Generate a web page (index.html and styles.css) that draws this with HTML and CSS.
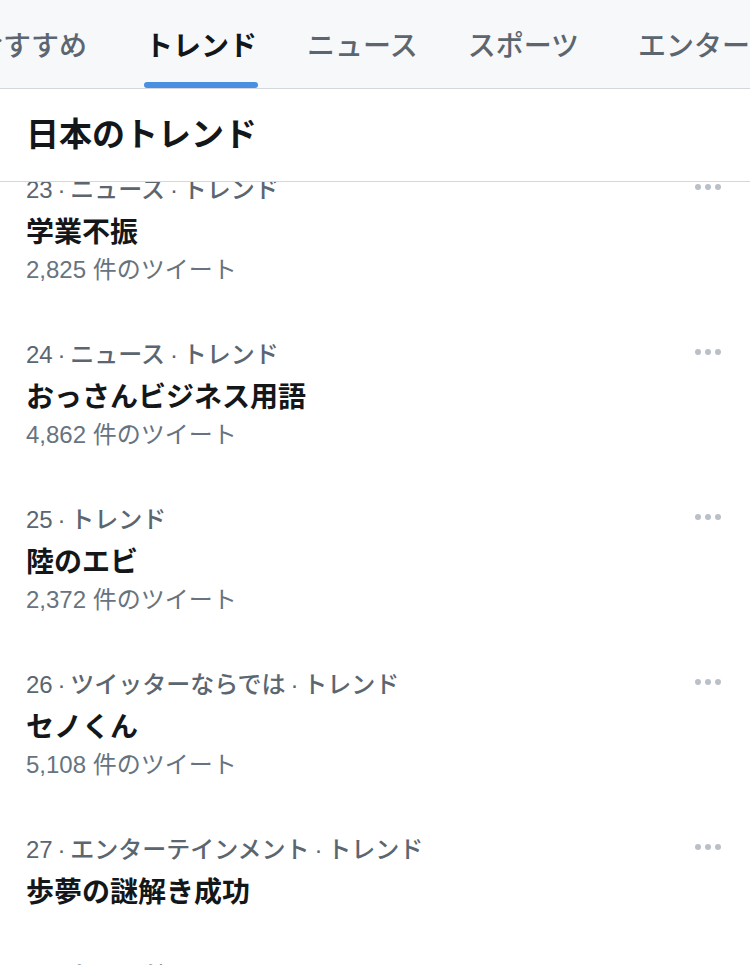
FILE: index.html
```html
<!DOCTYPE html>
<html lang="ja">
<head>
    <meta charset="UTF-8">
    <meta name="viewport" content="width=device-width, initial-scale=1.0">
    <title>トレンド</title>
    <link rel="stylesheet" href="styles.css">
</head>
<body>
    <nav class="tabs">
        <div class="tab first">おすすめ</div>
        <div class="tab active">トレンド</div>
        <div class="tab">ニュース</div>
        <div class="tab">スポーツ</div>
        <div class="tab wide">エンターテイメント</div>
    </nav>

    <h2 class="section-title">日本のトレンド</h2>

    <div class="scroll">
        <ul class="trend-list">
            <li class="trend">
                <div class="meta"><span>23&thinsp;·&thinsp;ニュース&thinsp;·&thinsp;トレンド</span><span class="more"><i></i><i></i><i></i></span></div>
                <div class="name">学業不振</div>
                <div class="count">2,825 件のツイート</div>
            </li>
            <li class="trend">
                <div class="meta"><span>24&thinsp;·&thinsp;ニュース&thinsp;·&thinsp;トレンド</span><span class="more"><i></i><i></i><i></i></span></div>
                <div class="name">おっさんビジネス用語</div>
                <div class="count">4,862 件のツイート</div>
            </li>
            <li class="trend">
                <div class="meta"><span>25&thinsp;·&thinsp;トレンド</span><span class="more"><i></i><i></i><i></i></span></div>
                <div class="name">陸のエビ</div>
                <div class="count">2,372 件のツイート</div>
            </li>
            <li class="trend">
                <div class="meta"><span>26&thinsp;·&thinsp;ツイッターならでは&thinsp;·&thinsp;トレンド</span><span class="more"><i></i><i></i><i></i></span></div>
                <div class="name">セノくん</div>
                <div class="count">5,108 件のツイート</div>
            </li>
            <li class="trend">
                <div class="meta"><span>27&thinsp;·&thinsp;エンターテインメント&thinsp;·&thinsp;トレンド</span><span class="more"><i></i><i></i><i></i></span></div>
                <div class="name">歩夢の謎解き成功</div>
            </li>
            <li class="trend">
                <div class="meta"><span>28&thinsp;·&thinsp;トレンド</span><span class="more"><i></i><i></i><i></i></span></div>
                <div class="name">トレンド</div>
            </li>
        </ul>
    </div>
</body>
</html>
```

FILE: styles.css
```css
body {
    margin: 0;
    width: 750px;
    height: 965px;
    overflow: hidden;
    background: #fff;
    color: #14171a;
    font-family: "Noto Sans CJK JP", "Noto Sans", sans-serif;
}
.tabs {
    display: flex;
    gap: 50px;
    height: 88px;
    background: #f7f8f9;
    border-bottom: 1px solid #d4d8dc;
    overflow: hidden;
    white-space: nowrap;
}
.tab {
    position: relative;
    flex-shrink: 0;
    font-size: 28px;
    font-weight: 500;
    line-height: 88px;
    color: #5b6670;
}
.tab.first {
    margin-left: -25px;
    margin-right: 8px;
}
.tab.wide {
    margin-left: 9px;
}
.tab.active {
    color: #14171a;
    font-weight: 700;
}
.tab.active::after {
    content: "";
    position: absolute;
    left: -1px;
    right: -1px;
    bottom: 0;
    height: 6px;
    border-radius: 3px;
    background: #4a90e2;
}
.section-title {
    margin: 0;
    padding: 0 26px;
    height: 92px;
    line-height: 86px;
    font-size: 33px;
    font-weight: 700;
    color: #14171a;
    border-bottom: 1px solid #d4d8dc;
}
.scroll {
    height: 783px;
    overflow: hidden;
}
.trend-list {
    list-style: none;
    margin: -30px 0 0;
    padding: 0;
}
.trend {
    padding: 20px 29px 27px 26px;
}
.meta {
    display: flex;
    justify-content: space-between;
    align-items: center;
    height: 30px;
    font-family: "Liberation Sans", "Noto Sans CJK JP", sans-serif;
    font-size: 24px;
    font-weight: 500;
    color: #5b6670;
}
.more {
    display: flex;
    gap: 4px;
}
.more i {
    width: 6px;
    height: 6px;
    border-radius: 50%;
    background: #b9c0c7;
}
.name {
    margin-top: 8px;
    line-height: 40px;
    font-size: 28px;
    font-weight: 700;
    color: #14171a;
}
.count {
    line-height: 40px;
    font-family: "Liberation Sans", "Noto Sans CJK JP", sans-serif;
    font-size: 24px;
    color: #67737e;
}
```
